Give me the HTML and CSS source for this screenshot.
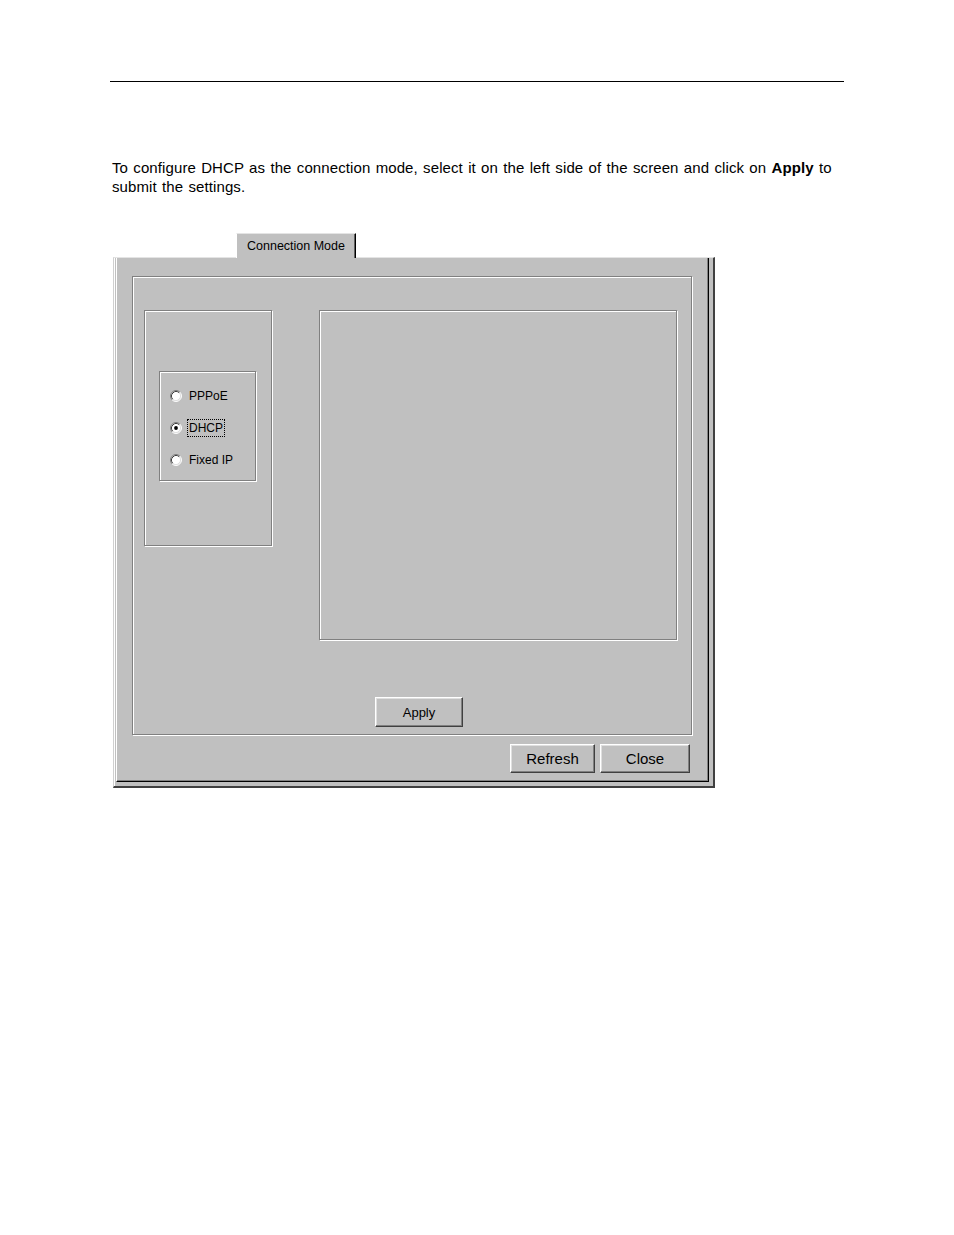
FILE: index.html
```html
<!DOCTYPE html>
<html>
<head>
<meta charset="utf-8">
<link rel="stylesheet" href="styles.css">
</head>
<body>
<div class="page">
  <div class="rule"></div>
  <p class="intro">To configure DHCP as the connection mode, select it on the left side of the screen and click on <b>Apply</b> to<br>submit the settings.</p>

  <div class="dialog">
    <div class="tabbar">
      <div class="tab">Connection Mode</div>
    </div>
    <div class="frame">
      <div class="panel">
        <div class="groupbox etched">
          <div class="row">
            <div class="leftbox etched">
              <div class="radiobox etched">
                <div class="radio">
                  <svg class="rb" width="12" height="12" viewBox="0 0 12 12"><circle cx="6" cy="6" r="5" fill="#fff"/><path d="M2.11 9.89A5.5 5.5 0 0 1 9.89 2.11" fill="none" stroke="#808080"/><path d="M9.89 2.11A5.5 5.5 0 0 1 2.11 9.89" fill="none" stroke="#fff"/><path d="M2.82 9.18A4.5 4.5 0 0 1 9.18 2.82" fill="none" stroke="#404040"/><path d="M9.18 2.82A4.5 4.5 0 0 1 2.82 9.18" fill="none" stroke="#dfdfdf"/></svg>
                  <span class="label">PPPoE</span>
                </div>
                <div class="radio">
                  <svg class="rb" width="12" height="12" viewBox="0 0 12 12"><circle cx="6" cy="6" r="5" fill="#fff"/><path d="M2.11 9.89A5.5 5.5 0 0 1 9.89 2.11" fill="none" stroke="#808080"/><path d="M9.89 2.11A5.5 5.5 0 0 1 2.11 9.89" fill="none" stroke="#fff"/><path d="M2.82 9.18A4.5 4.5 0 0 1 9.18 2.82" fill="none" stroke="#404040"/><path d="M9.18 2.82A4.5 4.5 0 0 1 2.82 9.18" fill="none" stroke="#dfdfdf"/><circle cx="6" cy="6" r="1.9" fill="#000"/></svg>
                  <span class="label focus">DHCP</span>
                </div>
                <div class="radio">
                  <svg class="rb" width="12" height="12" viewBox="0 0 12 12"><circle cx="6" cy="6" r="5" fill="#fff"/><path d="M2.11 9.89A5.5 5.5 0 0 1 9.89 2.11" fill="none" stroke="#808080"/><path d="M9.89 2.11A5.5 5.5 0 0 1 2.11 9.89" fill="none" stroke="#fff"/><path d="M2.82 9.18A4.5 4.5 0 0 1 9.18 2.82" fill="none" stroke="#404040"/><path d="M9.18 2.82A4.5 4.5 0 0 1 2.82 9.18" fill="none" stroke="#dfdfdf"/></svg>
                  <span class="label">Fixed IP</span>
                </div>
              </div>
            </div>
            <div class="rightbox etched"></div>
          </div>
          <button class="btn apply">Apply</button>
        </div>
        <div class="actions">
          <button class="btn big refresh">Refresh</button>
          <button class="btn big close">Close</button>
        </div>
      </div>
    </div>
  </div>
</div>
</body>
</html>
```

FILE: styles.css
```css
* { box-sizing: border-box; }
html, body { margin: 0; padding: 0; background: #fff; }
body { font-family: "Liberation Sans", Arial, sans-serif; color: #000; }

.page { padding-left: 110px; }

.rule {
  margin-top: 81px;
  width: 734px;
  border-top: 1px solid #000;
}

.intro {
  margin: 76px 0 0 2px;
  font-size: 15px;
  line-height: 19px;
  letter-spacing: 0.1px;
  word-spacing: 1px;
  white-space: nowrap;
}

.dialog {
  margin: 37px 0 0 3px;
  width: 602px;
}

.tabbar {
  display: flex;
  height: 24px;
  padding-left: 123px;
}

.tab {
  position: relative;
  z-index: 1;
  width: 120px;
  height: 25px;
  margin-bottom: -1px;
  background: #c0c0c0;
  border-top: 1px solid #e4e4e4;
  border-left: 1px solid #fff;
  border-right: 1px solid #000;
  box-shadow: inset -1px 0 #606060;
  padding-left: 10px;
  display: flex;
  align-items: center;
  font-size: 12.5px;
}

.frame {
  width: 602px;
  height: 531px;
  background: #c0c0c0;
  border-top: 1px solid #e4e4e4;
  border-left: 1px solid #d0d0d0;
  border-right: 2px solid #404040;
  border-bottom: 2px solid #404040;
  box-shadow: inset 1px 0 #fff;
  padding: 0 4px 4px 2px;
  display: flex;
}

.panel {
  flex: 1;
  min-width: 0;
  border-left: 1px solid #fff;
  border-right: 1px solid #000;
  border-bottom: 1px solid #000;
  box-shadow: inset -1px -1px #808080;
  padding: 18px 0 0 15px;
}

.etched {
  border: 1px solid #808080;
  box-shadow: 1px 1px 0 #fff, inset 1px 1px 0 #fff;
}

.groupbox {
  width: 560px;
  height: 459px;
  padding: 33px 0 0 11px;
}

.row {
  display: flex;
  align-items: flex-start;
}

.leftbox {
  width: 128px;
  height: 236px;
  padding: 60px 0 0 14px;
}

.radiobox {
  width: 97px;
  height: 110px;
  padding: 8px 0 0 10px;
}

.radio {
  display: flex;
  align-items: center;
  height: 32px;
  gap: 5px;
  font-size: 12px;
}

.rb { flex: none; display: block; }

.label {
  border: 1px dotted transparent;
  padding: 1px;
  line-height: 14px;
}

.label.focus { border-color: #000; }

.rightbox {
  margin-left: 47px;
  width: 358px;
  height: 330px;
}

.btn {
  display: flex;
  align-items: center;
  justify-content: center;
  background: #c0c0c0;
  border: 1px solid;
  border-color: #fff #404040 #404040 #fff;
  box-shadow: inset -1px -1px #808080, inset 1px 1px #dfdfdf;
  font-family: "Liberation Sans", Arial, sans-serif;
  color: #000;
  padding: 0;
  margin: 0;
}

.apply {
  margin: 57px 0 0 231px;
  width: 88px;
  height: 30px;
  font-size: 13px;
}

.actions {
  display: flex;
  justify-content: flex-end;
  gap: 5px;
  margin: 9px 18px 0 0;
}

.big { height: 29px; font-size: 15px; }
.refresh { width: 85px; }
.close { width: 90px; }
```
